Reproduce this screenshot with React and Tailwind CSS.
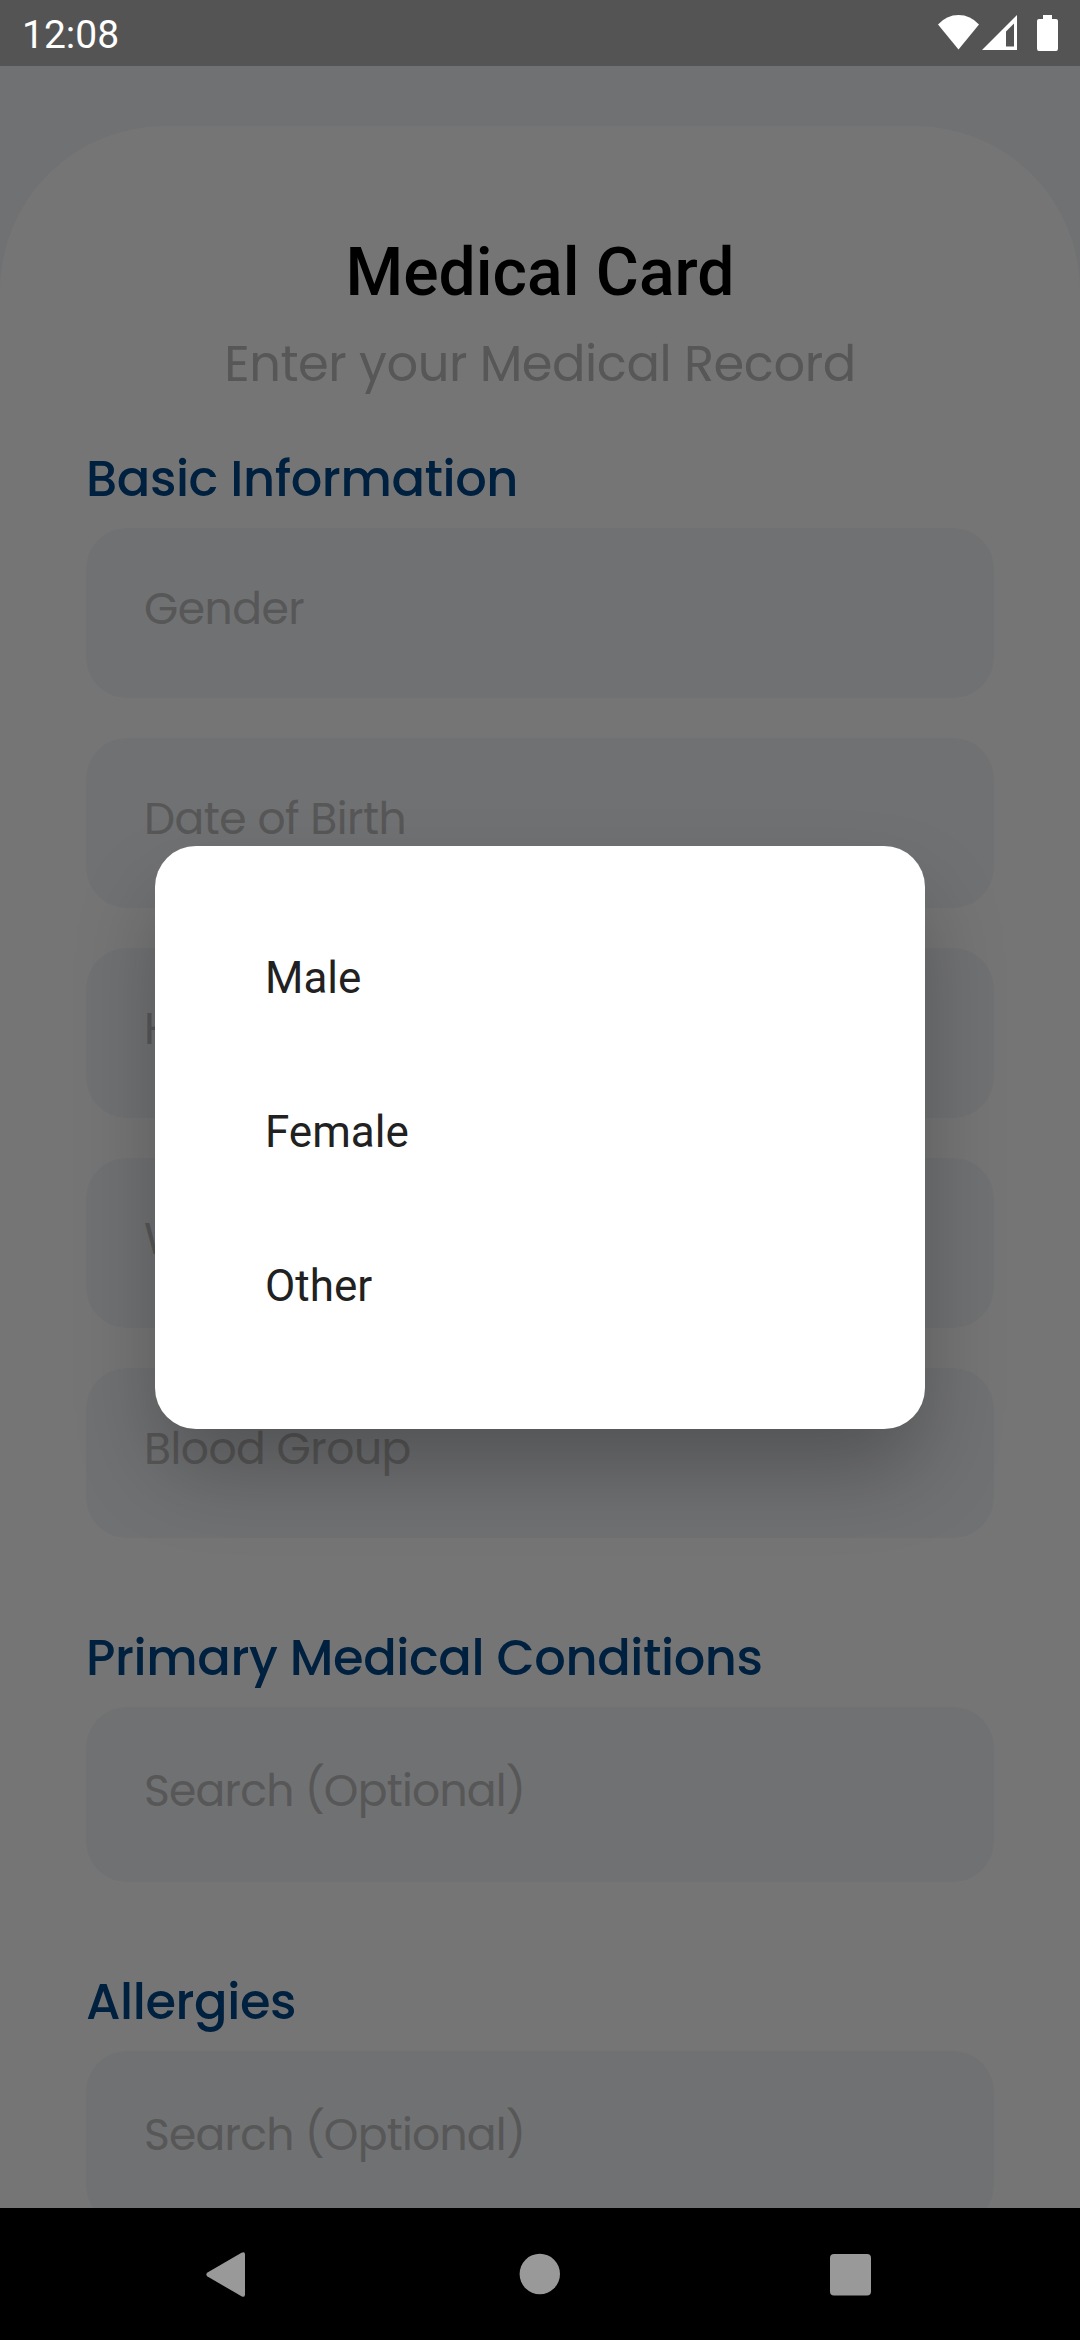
const poppins = "font-[Poppins,Inter,sans-serif]";

function StatusBar() {
  return (
    <header className="relative z-20 flex h-[66px] shrink-0 items-start justify-between bg-[#545454] text-white">
      <span className="pl-[22px] pt-[3px] text-[39px] leading-[64px]">12:08</span>
      <svg className="h-[66px] w-[150px]" viewBox="930 0 150 66" fill="currentColor">
        <path d="M938 24.5Q946.500 15 958.500 15Q970.500 15 979 24.500L958.500 49.500Z" />
        <path fillRule="evenodd" d="M1017 15V50H982ZM1014 23.500L1006 31.500V46.500H1014Z" />
        <path d="M1043 15H1052V19H1056Q1058 19 1058 21V48.500Q1058 51 1056 51H1039Q1037 51 1037 48.500V21Q1037 19 1039 19H1043Z" />
      </svg>
    </header>
  );
}

function Section({ title, fields, tall }) {
  return (
    <section className="mb-[85px]">
      <h2 className="mb-[14px] text-[49.5px] font-medium leading-[70px] tracking-[-0.42px] text-[#004789]">{title}</h2>
      <div className="flex flex-col gap-[40px]">
        {fields.map((f) => (
          <div
            key={f}
            className={
              (tall ? "h-[175px] pb-[7px] tracking-[-0.75px]" : "h-[170px] pb-[9px] tracking-[-0.5px]") +
              " flex items-center rounded-[41px] bg-[#f4f6fa] pl-[58px] text-[44px] text-[#bdbdbd]"
            }
          >
            {f}
          </div>
        ))}
      </div>
    </section>
  );
}

function GenderDialog() {
  return (
    <div
      role="dialog"
      className="absolute left-[155px] top-[779.5px] z-10 h-[583px] w-[770px] rounded-[41px] bg-white pl-[110px] pt-[55px] shadow-[0_45px_86px_-8px_rgba(0,0,0,0.28)]"
    >
      {["Male", "Female", "Other"].map((o) => (
        <div key={o} className="flex h-[154px] items-center text-[44px] leading-[52px] text-[#212121]">
          {o}
        </div>
      ))}
    </div>
  );
}

function NavBar() {
  return (
    <nav className="relative z-20 h-[132px] shrink-0 bg-black">
      <svg className="h-[132px] w-full" viewBox="0 2208 1080 132" fill="#999999">
        <path d="M207.500 2272.500L241.500 2252.700Q245 2251 245 2254.500V2294.500Q245 2298 241.500 2296.300L207.500 2276.500Q205.200 2274.500 207.500 2272.500Z" />
        <circle cx="539.800" cy="2274" r="20.200" />
        <rect x="830" y="2254" width="41" height="41.500" rx="4" />
      </svg>
    </nav>
  );
}

export default function App() {
  return (
    <div className="flex h-[2340px] w-[1080px] flex-col overflow-hidden font-[Roboto,sans-serif]">
      <StatusBar />
      <main className="relative h-[2142px] min-h-0 flex-1 overflow-hidden bg-[#f4f6fa] pt-[60px]">
        <div className={`${poppins} h-[2200px] rounded-t-[165px] bg-white px-[86px] pt-[108px]`}>
          <h1 className="text-center font-[Roboto,sans-serif] text-[66px] font-medium leading-[78px] text-black">
            Medical Card
          </h1>
          <p className="mb-[45px] mt-[17px] text-center text-[49.5px] leading-[70px] tracking-[-0.45px] text-[#bdbdbd]">
            Enter your Medical Record
          </p>
          <Section
            title="Basic Information"
            fields={["Gender", "Date of Birth", "Height", "Weight", "Blood Group"]}
          />
          <Section title="Primary Medical Conditions" fields={["Search (Optional)"]} tall />
          <Section title="Allergies" fields={["Search (Optional)"]} tall />
        </div>
        <div className="absolute inset-0 bg-black/54" />
        <GenderDialog />
      </main>
      <NavBar />
    </div>
  );
}
